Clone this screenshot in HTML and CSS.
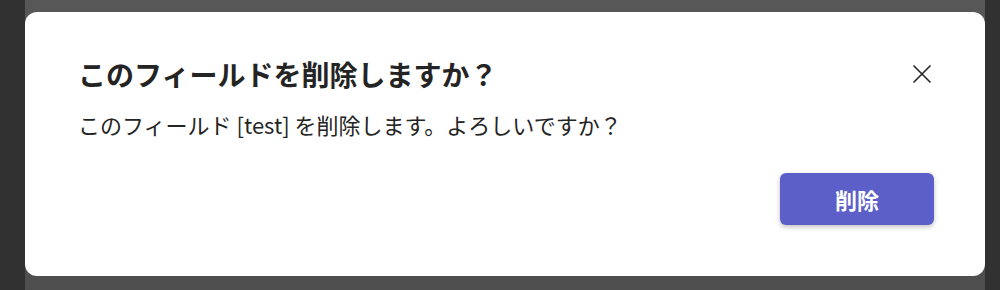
FILE: index.html
```html
<!DOCTYPE html>
<html lang="ja">
<head>
  <meta charset="UTF-8">
  <meta name="viewport" content="width=device-width, initial-scale=1.0">
  <title>フィールドの削除</title>
  <link rel="stylesheet" href="styles.css">
</head>
<body>
  <div class="backdrop">
    <div class="dialog">
      <div class="dialog-header">
        <h2 class="dialog-title">このフィールドを削除しますか？</h2>
        <button class="close-btn" aria-label="閉じる">
          <svg width="20" height="20" viewBox="0 0 20 20">
            <path d="M1.5 1.5 L18.5 18.5 M18.5 1.5 L1.5 18.5" stroke="#242424" stroke-width="1.6" fill="none"/>
          </svg>
        </button>
      </div>
      <p class="dialog-body">このフィールド [test] を削除します。よろしいですか？</p>
      <div class="dialog-actions">
        <button class="delete-btn">削除</button>
      </div>
    </div>
  </div>
</body>
</html>
```

FILE: styles.css
```css
body {
  margin: 0;
  padding: 0;
  background-color: #313131;
  font-family: "Noto Sans CJK JP", "Noto Sans", sans-serif;
  color: #242424;
}
.backdrop {
  margin-left: 25px;
  width: 960px;
  height: 290px;
  padding-top: 12px;
  box-sizing: border-box;
  background: linear-gradient(to bottom, #575757, #4e4e4e);
}
.dialog {
  height: 264px;
  box-sizing: border-box;
  background-color: #fff;
  border-radius: 12px;
  padding: 45px 51px 51px 53px;
  display: flex;
  flex-direction: column;
}
.dialog-header {
  display: flex;
  justify-content: space-between;
  align-items: center;
}
.dialog-title {
  margin: 0;
  font-size: 28px;
  line-height: 34px;
  font-weight: 700;
}
.close-btn {
  width: 24px;
  height: 24px;
  padding: 0;
  border: none;
  background: none;
  display: flex;
  align-items: center;
  justify-content: center;
  cursor: pointer;
}
.dialog-body {
  margin: 18px 0 0;
  font-size: 22px;
  line-height: 30px;
}
.dialog-actions {
  margin-top: auto;
  display: flex;
  justify-content: flex-end;
}
.delete-btn {
  width: 154px;
  height: 52px;
  border: none;
  border-radius: 6px;
  background-color: #5b5fc7;
  color: #fff;
  font-family: inherit;
  font-size: 22px;
  font-weight: 700;
  box-shadow: 0 2px 5px rgba(0, 0, 0, 0.25);
  cursor: pointer;
}
```
